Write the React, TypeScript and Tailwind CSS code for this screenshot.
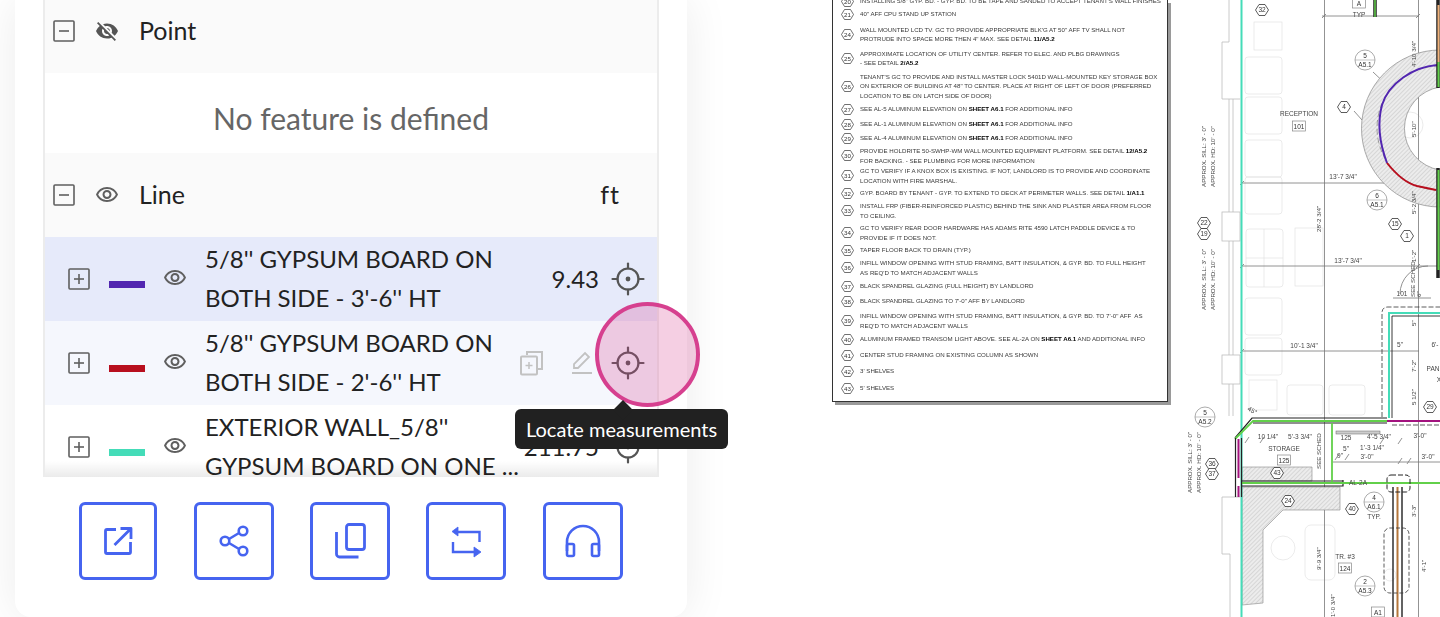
import { MdVisibilityOff, MdOutlineVisibility } from 'react-icons/md'

function BoxIcon({ plus }: { plus?: boolean }) {
  return (
    <svg width="22" height="22" viewBox="0 0 22 22" fill="none" stroke="#5f5f5f" strokeWidth="1.6" className="shrink-0">
      <rect x="1" y="1" width="20" height="20" rx="1" />
      <line x1="6" y1="11" x2="16" y2="11" />
      {plus && <line x1="11" y1="6" x2="11" y2="16" />}
    </svg>
  )
}

function Crosshair() {
  return (
    <svg width="34" height="34" viewBox="0 0 34 34" fill="none" stroke="#555" strokeWidth="2.2" strokeLinecap="round" className="shrink-0">
      <circle cx="17" cy="17" r="10.500" />
      <circle cx="17" cy="17" r="2.400" fill="#555" stroke="none" />
      <line x1="17" y1="1.500" x2="17" y2="6.500" />
      <line x1="17" y1="27.500" x2="17" y2="32.500" />
      <line x1="1.500" y1="17" x2="6.500" y2="17" />
      <line x1="27.500" y1="17" x2="32.500" y2="17" />
    </svg>
  )
}

function CopyPlus() {
  return (
    <svg width="24" height="26" viewBox="0 0 24 26" fill="none" stroke="#c2c2c2" strokeWidth="2" className="shrink-0">
      <path d="M8 5V2h15v17h-4" />
      <rect x="2" y="6.500" width="16" height="18" rx="1" />
      <path d="M10 12v7M6.500 15.500h7" strokeWidth="1.500" />
    </svg>
  )
}

function EditLine() {
  return (
    <svg width="22" height="24" viewBox="0 0 22 24" fill="none" stroke="#c2c2c2" strokeWidth="1.800" className="shrink-0">
      <path d="M3 17v-4L14 2l4 4L7 17z" />
      <line x1="1" y1="22" x2="21" y2="22" strokeWidth="2" />
    </svg>
  )
}

function OpenNew() {
  return (
    <svg width="30" height="30" viewBox="0 0 30 30" fill="none" stroke="currentColor" strokeWidth="2.800" strokeLinejoin="round">
      <path d="M13 3.500H4a1.500 1.500 0 0 0-1.500 1.500v21A1.500 1.500 0 0 0 4 27.500h22a1.500 1.500 0 0 0 1.500-1.500V16" />
      <path d="M11.500 19L27 3.500M17.500 2.500H28V13" />
    </svg>
  )
}

function ShareIcon() {
  return (
    <svg width="30" height="32" viewBox="0 0 30 32" fill="none" stroke="currentColor" strokeWidth="2.600">
      <circle cx="6" cy="16" r="4.300" />
      <circle cx="24" cy="6" r="4.300" />
      <circle cx="24" cy="26" r="4.300" />
      <path d="M10 14l10-6M10 18l10 6" />
    </svg>
  )
}

function CopyIcon() {
  return (
    <svg width="32" height="36" viewBox="0 0 32 36" fill="none" stroke="currentColor" strokeWidth="2.800" strokeLinejoin="round">
      <rect x="12.500" y="1.500" width="18" height="25" rx="2.500" />
      <path d="M2.500 9v22a3 3 0 0 0 3 3h19" />
    </svg>
  )
}

function RepeatIcon() {
  return (
    <svg width="32" height="33" viewBox="0 0 32 33" fill="currentColor" stroke="currentColor">
      <path d="M7 7h22.500v10" fill="none" strokeWidth="2.400" />
      <path d="M2 6.500L8 2v9z" strokeWidth="0.800" />
      <path d="M3 17v10h22" fill="none" strokeWidth="2.400" />
      <path d="M31 27l-7-5v10z" strokeWidth="0.800" />
    </svg>
  )
}

function HeadIcon() {
  return (
    <svg width="36" height="34" viewBox="0 0 36 34" fill="none" stroke="currentColor" strokeWidth="2.600" strokeLinejoin="round">
      <path d="M2 27V18a16 16 0 0 1 32 0v9" />
      <rect x="2" y="20" width="7" height="12" rx="1.500" />
      <rect x="27" y="20" width="7" height="12" rx="1.500" />
    </svg>
  )
}

function LineRow({ color, name, line2, value, bg, hover }: { color: string; name: string; line2: string; value?: string; bg: string; hover?: boolean }) {
  return (
    <div className={`flex h-[84px] shrink-0 items-center pl-[23px] pr-[12px] ${bg}`}>
      <BoxIcon plus />
      <span className={`ml-[19px] mt-[11px] h-[7px] w-[36px] shrink-0 ${color}`} />
      <MdOutlineVisibility className="ml-[18px] -mt-[2px] shrink-0 text-[#5f5f5f]" size={24} />
      <div className="ml-[18px] w-[312px] shrink-0 pb-[2px] text-[24px] leading-[39px] text-[#222]">
        <div className="whitespace-nowrap">{name}</div>
        <div className="whitespace-nowrap">{line2}</div>
      </div>
      <div className="flex min-w-0 flex-1 items-center justify-end">
        {hover && <CopyPlus />}
        {hover && <span className="ml-[28px] mr-[18px]"><EditLine /></span>}
        {value && <span className="mr-[12px] text-[24px] text-[#222]">{value}</span>}
        <Crosshair />
      </div>
    </div>
  )
}

const BUTTONS = [
  { c: 'w-[78px]', icon: <OpenNew /> },
  { c: 'w-[80px] ml-[1px]', icon: <ShareIcon /> },
  { c: 'w-[80px]', icon: <CopyIcon /> },
  { c: 'w-[80px]', icon: <RepeatIcon /> },
  { c: 'w-[80px] ml-[1px]', icon: <HeadIcon /> },
]

function Panel() {
  return (
    <div className="relative ml-[15px] flex h-[617px] w-[672px] shrink-0 flex-col rounded-b-[16px] bg-white px-[28px] shadow-[0_0_45px_rgba(0,0,0,0.08)]">
      <div className="relative h-[477px] shrink-0 overflow-hidden border-x-2 border-[#ececec]">
        <div className="-mt-[11px] flex h-[84px] items-center bg-[#fafafa] pl-[8px] text-[25px] text-[#222]">
          <BoxIcon />
          <MdVisibilityOff className="ml-[20px] text-[#555]" size={24} />
          <span className="ml-[20px]">Point</span>
        </div>
        <div className="flex h-[80px] items-center justify-center pt-[10px] text-[30px] text-[#666]">No feature is defined</div>
        <div className="flex h-[84px] items-center justify-between bg-[#fafafa] pl-[8px] pr-[37px] text-[25px] text-[#222]">
          <div className="flex items-center">
            <BoxIcon />
            <MdOutlineVisibility className="ml-[20px] text-[#5f5f5f]" size={24} />
            <span className="ml-[20px]">Line</span>
          </div>
          <span className="tracking-[1px]">ft</span>
        </div>
        <LineRow color="bg-[#5226b0]" name={`5/8'' GYPSUM BOARD ON`} line2={`BOTH SIDE - 3'-6'' HT`} value="9.43" bg="bg-[#e6eafa]" />
        <LineRow color="bg-[#b80f1e]" name={`5/8'' GYPSUM BOARD ON`} line2={`BOTH SIDE - 2'-6'' HT`} bg="bg-[#f5f7fd]" hover />
        <LineRow color="bg-[#44dcb8]" name={`EXTERIOR WALL_5/8''`} line2="GYPSUM BOARD ON ONE ..." value="211.75" bg="bg-white" />
        <div className="absolute inset-x-0 bottom-0 h-[16px] bg-gradient-to-b from-transparent to-black/8" />
      </div>
      <div className="mt-[25px] flex gap-[36px] pl-[36px]">
        {BUTTONS.map((b, i) => (
          <div key={i} className={`flex h-[78px] ${b.c} items-center justify-center rounded-[6px] border-[3px] border-[#4664f0] text-[#4664f0]`}>
            {b.icon}
          </div>
        ))}
      </div>
      {/* hover spot and tooltip over the locate button */}
      <div className="absolute left-[580px] top-[302px] h-[105px] w-[105px] rounded-full border-[4px] border-[#d6408f] bg-[#d6408f]/25" />
      <div className="absolute left-[500px] top-[409px] flex h-[40px] w-[213px] items-center justify-center rounded-[6px] bg-[#212121] text-[20px] text-white">
        <span className="absolute -top-[6px] left-[101px] h-[14px] w-[14px] rotate-45 bg-[#212121]" />
        <span className="relative">Locate measurements</span>
      </div>
    </div>
  )
}

const NOTES: { n: string; mt: string; h: string; lines: string[] }[] = [
  { n: '20', mt: '-mt-[5px]', h: 'h-[12px]', lines: [`INSTALLING 5/8" GYP. BD. - GYP. BD. TO BE TAPE AND SANDED TO ACCEPT TENANT'S WALL FINISHES`] },
  { n: '21', mt: 'mt-[1px]', h: 'h-[12px]', lines: [`40" AFF CPU STAND UP STATION`] },
  { n: '24', mt: 'mt-[4px]', h: 'h-[20px]', lines: [`WALL MOUNTED LCD TV. GC TO PROVIDE APPROPRIATE BLK'G AT 50" AFF TV SHALL NOT`, `PROTRUDE INTO SPACE MORE THEN 4" MAX. SEE DETAIL |11/A5.2`] },
  { n: '25', mt: 'mt-[4px]', h: 'h-[20px]', lines: ['APPROXIMATE LOCATION OF UTILITY CENTER. REFER TO ELEC. AND PLBG DRAWINGS', '- SEE DETAIL |2/A5.2'] },
  { n: '26', mt: 'mt-[3.5px]', h: 'h-[29px]', lines: ['TENANT\'S GC TO PROVIDE AND INSTALL MASTER LOCK 5401D WALL-MOUNTED KEY STORAGE BOX', 'ON EXTERIOR OF BUILDING AT 48" TO CENTER. PLACE AT RIGHT OF LEFT OF DOOR (PREFERRED', 'LOCATION TO BE ON LATCH SIDE OF DOOR)'] },
  { n: '27', mt: 'mt-[2.5px]', h: 'h-[12px]', lines: ['SEE AL-5 ALUMINUM ELEVATION ON |SHEET A6.1| FOR ADDITIONAL INFO'] },
  { n: '28', mt: 'mt-[3px]', h: 'h-[12px]', lines: ['SEE AL-1 ALUMINUM ELEVATION ON |SHEET A6.1| FOR ADDITIONAL INFO'] },
  { n: '29', mt: 'mt-[2px]', h: 'h-[12px]', lines: ['SEE AL-4 ALUMINUM ELEVATION ON |SHEET A6.1| FOR ADDITIONAL INFO'] },
  { n: '30', mt: 'mt-[1.5px]', h: 'h-[20px]', lines: ['PROVIDE HOLDRITE 50-SWHP-WM WALL MOUNTED EQUIPMENT PLATFORM. SEE DETAIL |12/A5.2', 'FOR BACKING. - SEE PLUMBING FOR MORE INFORMATION'] },
  { n: '31', mt: 'mt-0', h: 'h-[20px]', lines: ['GC TO VERIFY IF A KNOX BOX IS EXISTING. IF NOT, LANDLORD IS TO PROVIDE AND COORDINATE', 'LOCATION WITH FIRE MARSHAL.'] },
  { n: '32', mt: 'mt-[1.5px]', h: 'h-[12px]', lines: ['GYP. BOARD BY TENANT - GYP. TO EXTEND TO DECK AT PERIMETER WALLS. SEE DETAIL |1/A1.1'] },
  { n: '33', mt: 'mt-[1.5px]', h: 'h-[20px]', lines: ['INSTALL FRP (FIBER-REINFORCED PLASTIC) BEHIND THE SINK AND PLASTER AREA FROM FLOOR', 'TO CEILING.'] },
  { n: '34', mt: 'mt-[2px]', h: 'h-[20px]', lines: ['GC TO VERIFY REAR DOOR HARDWARE HAS ADAMS RITE 4590 LATCH PADDLE DEVICE & TO', 'PROVIDE IF IT DOES NOT.'] },
  { n: '35', mt: 'mt-[1.5px]', h: 'h-[12px]', lines: ['TAPER FLOOR BACK TO DRAIN (TYP.)'] },
  { n: '36', mt: 'mt-[1.5px]', h: 'h-[20px]', lines: ['INFILL WINDOW OPENING WITH STUD FRAMING, BATT INSULATION, & GYP. BD. TO FULL HEIGHT', `AS REQ'D TO MATCH ADJACENT WALLS`] },
  { n: '37', mt: 'mt-[2.5px]', h: 'h-[12px]', lines: ['BLACK SPANDREL GLAZING (FULL HEIGHT) BY LANDLORD'] },
  { n: '38', mt: 'mt-[3px]', h: 'h-[12px]', lines: [`BLACK SPANDREL GLAZING TO 7'-0" AFF BY LANDLORD`] },
  { n: '39', mt: 'mt-[3.5px]', h: 'h-[20px]', lines: [`INFILL WINDOW OPENING WITH STUD FRAMING, BATT INSULATION, & GYP. BD. TO 7'-0" AFF  AS`, `REQ'D TO MATCH ADJACENT WALLS`] },
  { n: '40', mt: 'mt-[2.5px]', h: 'h-[12px]', lines: ['ALUMINUM FRAMED TRANSOM LIGHT ABOVE. SEE AL-2A ON |SHEET A6.1| AND ADDITIONAL INFO'] },
  { n: '41', mt: 'mt-[4px]', h: 'h-[12px]', lines: ['CENTER STUD FRAMING ON EXISTING COLUMN AS SHOWN'] },
  { n: '42', mt: 'mt-[4px]', h: 'h-[12px]', lines: [`3' SHELVES`] },
  { n: '43', mt: 'mt-[5px]', h: 'h-[12px]', lines: [`5' SHELVES`] },
]

function Hex({ n }: { n: string }) {
  return (
    <svg width="13" height="11" viewBox="0 0 13 11" className="shrink-0">
      <polygon points="0.500,5.500 3.500,0.500 9.500,0.500 12.500,5.500 9.500,10.500 3.500,10.500" fill="white" stroke="#333" strokeWidth="0.700" />
      <text x="6.500" y="7.600" fontSize="6.200" textAnchor="middle" fill="#333" fontFamily="Liberation Sans">{n}</text>
    </svg>
  )
}

function NoteLine({ text }: { text: string }) {
  const parts = text.split('|')
  return (
    <div className="whitespace-pre leading-[9.500px]">
      {parts.map((p, i) => (i % 2 ? <b key={i} className="text-black">{p}</b> : <span key={i}>{p}</span>))}
    </div>
  )
}

function Sheet() {
  return (
    <div className="ml-[145px] h-[402px] w-[336px] shrink-0 overflow-hidden border-x border-b border-[#333] bg-white pl-[8px] font-['Liberation_Sans',sans-serif] text-[6.150px] text-[#3a3a3a] shadow-[3px_3px_0_#9a9a9a] blur-[0.3px]">
      {NOTES.map(r => (
        <div key={r.n} className={`flex items-center gap-[6px] ${r.mt} ${r.h}`}>
          <Hex n={r.n} />
          <div>{r.lines.map((l, i) => <NoteLine key={i} text={l} />)}</div>
        </div>
      ))}
    </div>
  )
}

const HEXES: [number, number, string][] = [
  [1262, 10, '32'], [1344, 107, '4'], [1395, 224, '15'], [1407, 236, '1'], [1204, 223, '22'], [1204, 234, '19'],
  [1212, 464, '36'], [1212, 474, '37'], [1277, 473, '43'], [1288, 501, '24'], [1352, 509, '40'], [1430, 407, '29'],
]

const ROUNDS: [number, number, string, string][] = [
  [1365, 60, '5', 'A5.1'], [1377, 200, '6', 'A5.1'], [1205, 417, '5', 'A5.2'], [1374, 502, '4', 'A6.1'], [1365, 586, '2', 'A5.3'],
]

const LABELS: [number, number, string][] = [
  [1299, 116, 'RECEPTION'], [1343, 179, `13'-7 3/4"`], [1348, 263, `13'-7 3/4"`], [1304, 348, `10'-1 3/4"`],
  [1284, 451, 'STORAGE'], [1345, 559, 'TR. #3'], [1374, 519, 'TYP.'], [1359, 17, 'TYP'],
  [1268, 439, `10 1/4"`], [1300, 439, `5'-3 3/4"`], [1346, 440, '125'], [1379, 439, `4'-5 3/4"`], [1420, 438, `3'-0"`],
  [1372, 450, `1'-3 1/4"`], [1367, 459, `3'-0"`], [1428, 459, `3'-0"`], [1340, 458, `9"`], [1346, 451, `5"`],
  [1358, 485, 'AL-2A'], [1433, 371, 'PAN'], [1439, 382, 'X'], [1435, 347, `6'-`], [1400, 347, `5"`], [1402, 296, '101'],
]

const BOXED: [number, number, string][] = [[1299, 126, '101'], [1284, 460, '125'], [1345, 568, '124'], [1378, 612, 'A1'], [1359, 3, 'A']]

const VERTICAL: [number, number, string][] = [
  [1206, 187, `APPROX. SILL: 3' - 0"`], [1215, 187, `APPROX. HD: 10' - 0"`],
  [1206, 310, `APPROX. SILL: 3' - 0"`], [1215, 310, `APPROX. HD: 10' - 0"`],
  [1192, 493, `APPROX. SILL: 3' - 0"`], [1201, 493, `APPROX. HD: 10' - 0"`],
  [1321, 232, `28'-2 3/4"`], [1416, 67, `4'-10 3/4"`], [1416, 137, `5'-10"`], [1416, 214, `5'-2 3/4"`],
  [1416, 262, `1'-2"`], [1415, 297, 'SEE SCHED'], [1421, 297, `6"`], [1321, 469, 'SEE SCHED'], [1321, 570, `9'-9 3/4"`],
  [1335, 617, `1'-0 3/4"`], [1416, 517, `3'-3"`], [1426, 572, `4'-1"`], [1416, 372, `7'-2"`], [1416, 405, `5 1/2"`], [1416, 326, `5"`],
]

function Plan() {
  return (
    <svg width="260" height="617" viewBox="1180 0 260 617" className="ml-[12px] shrink-0 blur-[0.3px]" fill="none" fontFamily="Liberation Sans">
      <defs>
        <pattern id="hatch" width="3" height="3" patternUnits="userSpaceOnUse" patternTransform="rotate(45)">
          <rect width="3" height="3" fill="#ececec" />
          <line x1="0" y1="0" x2="0" y2="3" stroke="#b5b5b5" strokeWidth="0.800" />
        </pattern>
      </defs>
      {/* furniture, pale */}
      <g stroke="#e2e2e2" strokeWidth="0.700">
        <rect x="1254" y="22" width="28" height="28" />
        <rect x="1245" y="57" width="37" height="37" rx="3" />
        <rect x="1245" y="97" width="37" height="37" rx="3" />
        <rect x="1245" y="140" width="37" height="37" rx="3" />
        <rect x="1245" y="177" width="37" height="37" rx="3" />
        <rect x="1246" y="229" width="37" height="58" rx="3" />
        <line x1="1264" y1="229" x2="1264" y2="287" />
        <line x1="1246" y1="258" x2="1283" y2="258" />
        <rect x="1295" y="228" width="28" height="58" />
        <rect x="1245" y="298" width="37" height="37" rx="3" />
        <rect x="1245" y="338" width="37" height="37" rx="3" />
        <rect x="1249" y="380" width="28" height="30" />
        <rect x="1287" y="385" width="36" height="30" rx="3" />
        <rect x="1329" y="385" width="36" height="30" rx="3" />
        <circle cx="1410" cy="125" r="13" />
        <circle cx="1283" cy="548" r="12" />
        <rect x="1305" y="525" width="30" height="55" rx="6" />
        <circle cx="1390" cy="575" r="6" />
      </g>
      {/* window wall on the left */}
      <g stroke="#bdbdbd" strokeWidth="0.800">
        <path d="M1229 0v42h-7v57h18" />
        <path d="M1229 99v113M1233 99v113" />
        <rect x="1222" y="212" width="18" height="29" />
        <path d="M1229 241v59M1233 241v59" />
        <path d="M1229 300v55M1233 300v55" />
        <rect x="1222" y="355" width="18" height="29" />
        <path d="M1229 384v32M1233 384v32" />
        <path d="M1240 497h-18v57h8v63" />
      </g>
      {/* dimension lines */}
      <g stroke="#777" strokeWidth="0.800">
        <line x1="1324.500" y1="0" x2="1324.500" y2="617" />
        <line x1="1418.500" y1="0" x2="1418.500" y2="617" />
        <line x1="1322" y1="16" x2="1419" y2="16" />
        <line x1="1242" y1="183" x2="1440" y2="183" />
        <line x1="1242" y1="266" x2="1440" y2="266" />
        <line x1="1242" y1="351" x2="1419" y2="351" />
        <line x1="1333" y1="462" x2="1440" y2="462" />
        <path d="M1240 185l4-4M1240 268l4-4M1240 353l4-4M1322 18l4-4M1416 18l4-4M1416 185l4-4M1416 268l4-4" />
        <path d="M1245 443l4-6M1260 443l4-6M1335 460l4-6M1345 460l4-6M1380 444l4-6M1398 444l4-6M1398 464l4-6M1407 464l4-6" />
        <path d="M1362 120l-8-9M1373 72l17 16M1400 294a28 28 0 0 1 28-28M1393 298h38" />
      </g>
      {/* hatched slab and counter */}
      <path d="M1440 50a78 78 0 0 0 0 157v-37a42 42 0 0 1 0-83z" fill="url(#hatch)" stroke="#8a8a8a" strokeWidth="0.700" />
      <path d="M1440 66a62 62 0 0 0-2 124" stroke="#555" strokeWidth="0.500" strokeDasharray="6 3" />
      <path d="M1242 467h70v14h-70zM1242 487h98v23h-57l-20 20v73l-21 2z" fill="url(#hatch)" stroke="#888" strokeWidth="0.600" />
      {/* coloured walls */}
      <path d="M1241.500 0V617" stroke="#44dcb8" strokeWidth="2" />
      <path d="M1437 65c-24 2-48 18-55 40-6 22-1 42 5 58" stroke="#5226b0" strokeWidth="2" />
      <path d="M1387 163c8 10 18 20 30 23l19 4" stroke="#b80f1e" strokeWidth="2" />
      <path d="M1438 0v88M1438 168v110" stroke="#222" strokeWidth="3.500" />
      <path d="M1438.500 5v57" stroke="#f0b27a" strokeWidth="2" />
      <path d="M1438.500 62v25M1438.500 170v100" stroke="#62d04a" strokeWidth="2" />
      <path d="M1375 0v17" stroke="#222" strokeWidth="3.500" />
      <path d="M1375 0v17" stroke="#62d04a" strokeWidth="1.500" />
      {/* partition lines */}
      <path d="M1235 438l17-20h135M1253 423h134M1242 481h101M1242 486h101v-6" stroke="#222" strokeWidth="1.200" />
      <path d="M1235 439l18-18h134M1241 483h199M1332 423v60" stroke="#62d04a" strokeWidth="1.800" />
      <path d="M1235.500 438v59M1241.500 438v59" stroke="#222" strokeWidth="1.200" />
      <path d="M1238.500 439v39M1238.500 486v11" stroke="#a3137e" strokeWidth="2" />
      <path d="M1387 421h53" stroke="#a3137e" strokeWidth="2" />
      <path d="M1382 417V313q0-6 6-6h52M1392 425h48" stroke="#333" strokeWidth="0.800" strokeDasharray="5 2" />
      <path d="M1389 418V313h51" stroke="#44dcb8" strokeWidth="2" />
      <path d="M1392 418V316h48" stroke="#222" strokeWidth="0.900" />
      <path d="M1393 487V617M1402 487V617" stroke="#222" strokeWidth="1.400" />
      <path d="M1397.500 487V617" stroke="#b5763a" strokeWidth="2" />
      <rect x="1384" y="528" width="25" height="65" rx="6" stroke="#333" strokeWidth="0.800" strokeDasharray="4 2" />
      <rect x="1387" y="475" width="23" height="17" rx="4" stroke="#222" strokeWidth="1" strokeDasharray="5 2" />
      <rect x="1336" y="431" width="44" height="3" fill="#ccc" stroke="#666" strokeWidth="0.500" />
      {HEXES.map(([x, y, n]) => (
        <g key={`${x}-${y}`}>
          <polygon points={`${x - 6.500},${y} ${x - 3},${y - 5.500} ${x + 3},${y - 5.500} ${x + 6.500},${y} ${x + 3},${y + 5.500} ${x - 3},${y + 5.500}`} fill="white" stroke="#333" strokeWidth="0.800" />
          <text x={x} y={y + 2.300} fontSize="6.500" fill="#333" textAnchor="middle">{n}</text>
        </g>
      ))}
      {ROUNDS.map(([x, y, a, b]) => (
        <g key={`${x}-${y}`}>
          <circle cx={x} cy={y} r="10" fill="white" stroke="#888" strokeWidth="0.700" />
          <line x1={x - 10} y1={y} x2={x + 10} y2={y} stroke="#888" strokeWidth="0.500" />
          <text x={x} y={y - 2} fontSize="6.500" fill="#333" textAnchor="middle">{a}</text>
          <text x={x} y={y + 7} fontSize="6.500" fill="#333" textAnchor="middle">{b}</text>
        </g>
      ))}
      {BOXED.map(([x, y, t]) => (
        <g key={`${x}-${y}`}>
          <rect x={x - 6.500} y={y - 5} width="13" height="10" fill="white" stroke="#888" strokeWidth="0.700" />
          <text x={x} y={y + 2.500} fontSize="6.500" fill="#333" textAnchor="middle">{t}</text>
        </g>
      ))}
      {LABELS.map(([x, y, t]) => (
        <text key={`${x}-${y}`} x={x} y={y} fontSize="6.500" fill="#444" textAnchor="middle">{t}</text>
      ))}
      {VERTICAL.map(([x, y, t]) => (
        <text key={`${x}-${y}`} transform={`translate(${x} ${y}) rotate(-90)`} fontSize="6.200" fill="#444">{t}</text>
      ))}
      <text transform="translate(1247 410) rotate(30)" fontSize="6.500" fill="#444">45°</text>
    </svg>
  )
}

export default function App() {
  return (
    <div className="flex h-[617px] w-[1440px] overflow-hidden bg-white font-['Lato','Noto_Sans',sans-serif]">
      <Panel />
      <Sheet />
      <Plan />
    </div>
  )
}
